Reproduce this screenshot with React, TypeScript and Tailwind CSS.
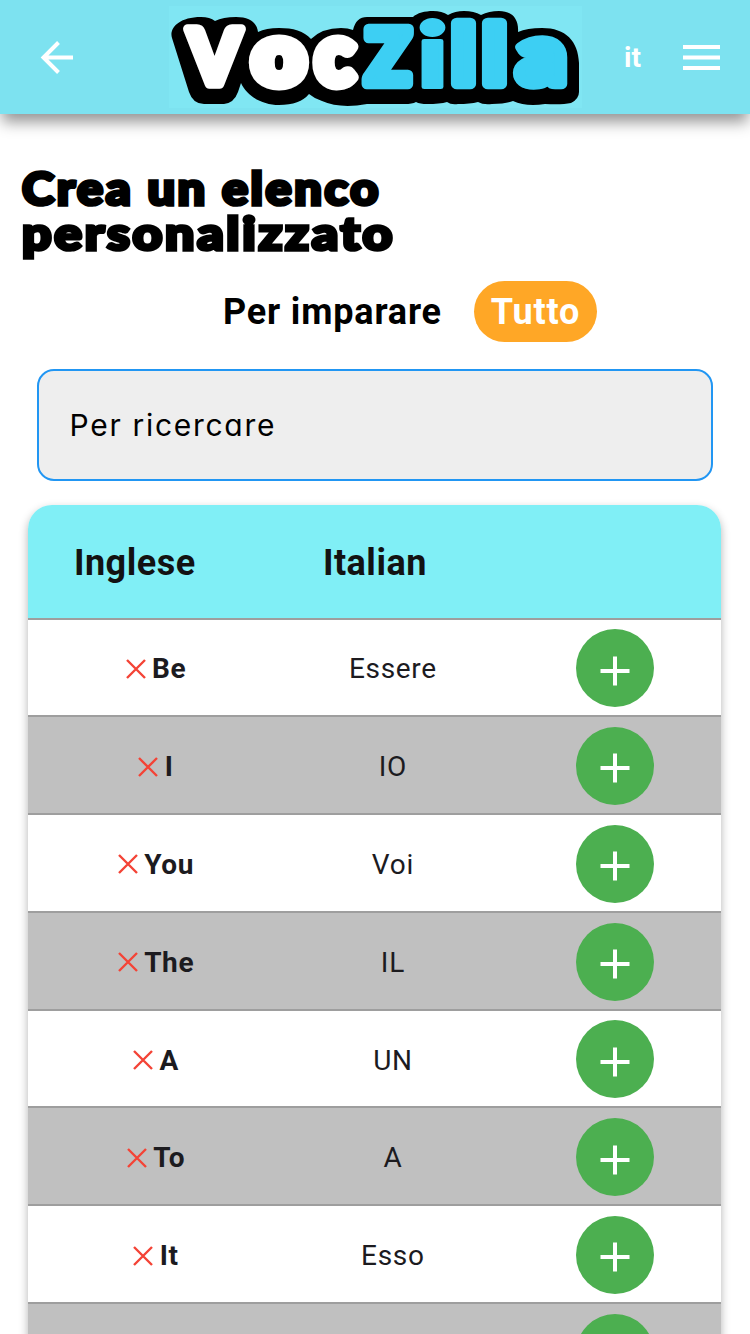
const logoLetters = [
  { ch: "V", x: 188.5, y: 84, w: 52, sy: 0.97, sw: 10, fill: "#ffffff" },
  { ch: "o", x: 252.5, y: 84, w: 53, sy: 1.07, sw: 11, fill: "#ffffff" },
  { ch: "c", x: 315.5, y: 84, w: 38.5, sy: 1.07, sw: 11, fill: "#ffffff" },
  { ch: "Z", x: 365.5, y: 84, w: 45, sy: 0.97, sw: 11, fill: "#3dcff3" },
  { ch: "i", x: 417, y: 86.5, w: 31, sy: 1.14, sw: 3.5, fill: "#3dcff3" },
  { ch: "l", x: 451.5, y: 84, w: 24, sy: 1.04, sw: 10, fill: "#3dcff3" },
  { ch: "l", x: 482.5, y: 84, w: 24, sy: 1.04, sw: 10, fill: "#3dcff3" },
  { ch: "a", x: 517, y: 84, w: 49, sy: 1.07, sw: 10, fill: "#3dcff3" },
];

function Logo() {
  return (
    <svg className="block h-[102px] w-[413px] bg-[#80e6f3]" viewBox="169 6 413 102" aria-label="VocZilla">
      <path d="M172 38C169 29 178 17 201 17Q210 17 215 21Q223 17 236 17C250 17 257 23 258 32Q266 28 279 28C293 28 304 31 311 39Q322 28 341 28Q348 28 353 30Q356 17 367 17H413C417 13 425 11 433 11Q442 11 448 15Q455 11 464 11Q474 11 481 15Q489 11 499 11C512 11 519 19 518 32Q527 28 542 28C566 28 578 41 579 63V92Q579 99 571 103Q562 105 545 104Q526 107 513 101Q506 104 492 104Q483 105 478 102Q470 104 458 104Q451 105 447 102Q440 104 427 104Q420 104 416 102Q412 104 405 104H367Q340 109 322 101Q315 99 309 94Q300 105 279 105C262 105 247 96 241 83L238 92Q234 103 224 104H204Q193 104 189 92Z" />
      {logoLetters.map((l, i) => (
        <text
          key={i}
          transform={`translate(${l.x} ${l.y}) scale(1 ${l.sy})`}
          textLength={l.w}
          lengthAdjust="spacingAndGlyphs"
          fontFamily="Lato"
          fontWeight={900}
          fontSize={78}
          fill={l.fill}
          stroke={l.fill}
          strokeWidth={l.sw}
          strokeLinejoin="round"
        >
          {l.ch}
        </text>
      ))}
    </svg>
  );
}

const rows = [
  ["Be", "Essere"],
  ["I", "IO"],
  ["You", "Voi"],
  ["The", "IL"],
  ["A", "UN"],
  ["To", "A"],
  ["It", "Esso"],
  ["", ""],
];

function Row({ en, it, shaded }: { en: string; it: string; shaded: boolean }) {
  return (
    <div
      className={`grid h-[97.8px] shrink-0 grid-cols-[243px_231px_213px] items-center border-t-2 border-[#9e9e9e] pl-[6px] text-[28px] text-[#1c1b1f] ${shaded ? "bg-[#c0c0c0]" : "bg-white"}`}
    >
      <div className="flex items-center justify-center gap-[6.500px] pt-[4px]">
        {en && (
          <svg className="mb-px size-5" viewBox="0 0 20 20" stroke="#f44336" strokeWidth="2.4">
            <path d="M1 1 19 19M19 1 1 19" />
          </svg>
        )}
        <span className="font-bold tracking-[0.600px]">{en}</span>
      </div>
      <div className="pt-[4px] text-center tracking-[0.700px]">{it}</div>
      <div className="flex justify-center pt-[1.500px]">
        <div className="flex size-[78px] items-center justify-center rounded-full bg-[#4caf50] pt-[5px]">
          <svg className="size-[30px]" viewBox="0 0 30 30" stroke="#fff" strokeWidth="4">
            <path d="M15 .5V29.5M.5 15H29.5" />
          </svg>
        </div>
      </div>
    </div>
  );
}

export default function App() {
  return (
    <div className="flex h-[1334px] w-[750px] flex-col overflow-hidden bg-white font-['Roboto',sans-serif]">
      <header className="flex h-[114px] shrink-0 items-center bg-[#7de2f0] shadow-[0_10px_14px_-2px_rgba(0,0,0,0.42)]">
        <svg className="ml-[40px] h-[34px] w-[34px]" viewBox="0 0 34 34" fill="none" stroke="#fff" strokeWidth="4">
          <path d="M33 17.500H4M18.500 2.500 3.500 17.500l15 15" />
        </svg>
        <div className="ml-[95px]">
          <Logo />
        </div>
        <span className="mt-[2px] ml-[42px] w-[20px] text-[28px] font-bold text-white">it</span>
        <svg className="ml-[39px] h-[26px] w-[37px]" viewBox="0 0 37 26" stroke="#fff" strokeWidth="4">
          <path d="M0 3H37M0 13.500H37M0 24H37" />
        </svg>
      </header>

      <h1 className="mt-[52px] ml-[22px] flex h-[90px] shrink-0 flex-col font-['Lato',sans-serif] text-[45px] leading-[45px] font-black whitespace-nowrap text-black [-webkit-text-stroke:3.600px_black]">
        <span className="origin-left scale-x-[1.082] self-start tracking-[2.400px]">Crea un elenco</span>
        <span className="origin-left scale-x-[1.148] self-start tracking-[2.400px]">personalizzato</span>
      </h1>

      <div className="mt-[25px] ml-[223px] flex shrink-0 items-center text-[36px] font-bold">
        <span className="w-[251px] tracking-[0.830px] text-black">Per imparare</span>
        <span className="flex h-[61px] w-[123px] items-center justify-center rounded-[32px] bg-[#ffa726] tracking-[0.800px] text-white">
          Tutto
        </span>
      </div>

      <div className="mt-[27px] ml-[37px] flex h-[112px] w-[676px] shrink-0 items-center rounded-[17px] border-2 border-[#2196f3] bg-[#eeeeee] pl-[30.500px] font-['Inter',sans-serif] text-[30px] tracking-[1.700px] text-black [font-feature-settings:'cv11']">
        Per ricercare
      </div>

      <div className="mt-[24px] ml-[28.400px] flex w-[693px] shrink-0 flex-col overflow-hidden rounded-t-[24px] shadow-[0_4px_10px_rgba(0,0,0,0.3)]">
        <div className="flex h-[112.500px] shrink-0 items-center bg-[#80eff6] pt-[3px] pl-[45.500px] text-[36px] font-bold tracking-[0.500px] text-[#121212]">
          <span className="w-[249px]">Inglese</span>
          <span>Italian</span>
        </div>
        {rows.map(([en, it], i) => (
          <Row key={i} en={en} it={it} shaded={i % 2 === 1} />
        ))}
      </div>
    </div>
  );
}
